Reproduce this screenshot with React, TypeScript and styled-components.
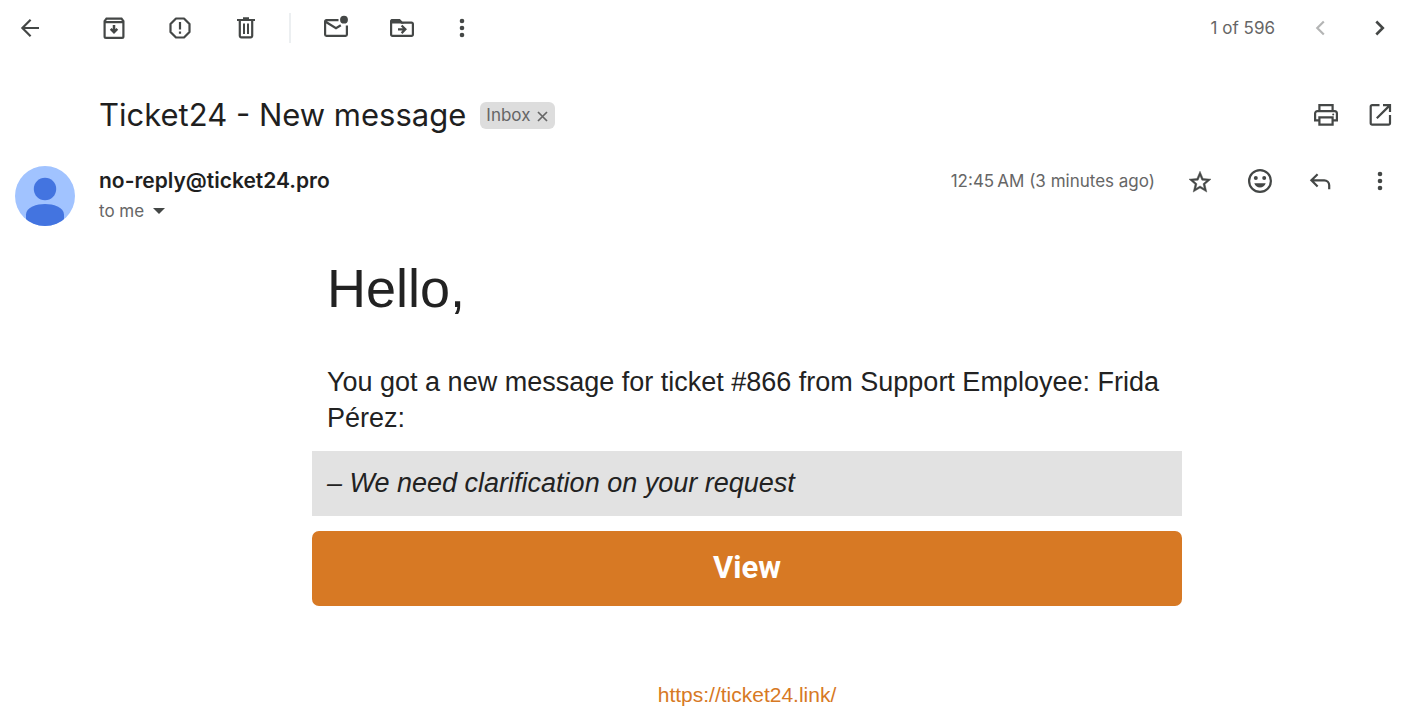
import React from "react";
import styled, { createGlobalStyle } from "styled-components";

const GlobalStyle = createGlobalStyle`
  *, *::before, *::after { box-sizing: border-box; }
  body { margin: 0; background: #fff; color: #1f1f1f; }
  button { border: 0; padding: 0; background: none; color: inherit; font: inherit; cursor: pointer; }
  h1, h2, p, blockquote { margin: 0; font-weight: 400; }
`;

const uiFont = `Inter, Roboto, sans-serif`;
const mailFont = `"Liberation Sans", Arial, sans-serif`;

const Page = styled.div`
  min-height: 100vh;
  padding: 0 14px 18px 15px;
  font-family: ${uiFont};
`;

const Toolbar = styled.nav`
  display: flex;
  align-items: center;
  height: 56px;
  color: #444746;
`;

const ToolGroup = styled.div<{ $gap: number; $start?: number | "auto" }>`
  display: flex;
  align-items: center;
  gap: ${(p) => p.$gap}px;
  margin-left: ${(p) => (p.$start === "auto" ? "auto" : `${p.$start ?? 0}px`)};
`;

const Divider = styled.span`
  width: 2px;
  height: 30px;
  margin: 0 30px 0 28px;
  background: #eceff1;
`;

const Muted = styled.span`
  color: #666;
  font-size: 17px;
  line-height: 30px;
  white-space: nowrap;
`;

const IconButton = styled.button<{ $slim?: boolean }>`
  display: flex;
  justify-content: center;
  width: ${(p) => (p.$slim ? 18 : 30)}px;
  height: 30px;
  color: #444746;

  &:disabled { color: #b4b5b5; cursor: default; }

  svg { flex: none; display: block; }
`;

const SubjectRow = styled.header`
  display: flex;
  align-items: center;
  height: 60px;
  margin: 29px 0 21px;
  padding-left: 84px;
`;

const Subject = styled.h1`
  font-size: 31px;
  line-height: 42px;
`;

const Label = styled.span`
  display: flex;
  align-items: center;
  gap: 7px;
  height: 27px;
  margin-left: 14px;
  padding: 0 7px 0 6px;
  border-radius: 6px;
  background: #ddd;
  color: #666;
  font-size: 17px;
`;

const RemoveLabel = styled.button`
  display: flex;
  padding-top: 3px;
`;

const SenderRow = styled.section`
  display: flex;
  align-items: flex-start;
`;

const Avatar = styled.svg`
  flex: none;
  margin-right: 24px;
`;

const SenderText = styled.div`
  display: flex;
  flex-direction: column;
`;

const Sender = styled.h2`
  font-size: 21px;
  font-weight: 600;
  line-height: 30px;
`;

const Recipient = styled.button`
  display: flex;
  align-items: center;
  gap: 9px;
`;

const MessageArea = styled.main`
  padding: 29px 0 0 84px;
`;

const Message = styled.article`
  max-width: 870px;
  margin: 0 auto;
  color: #222;
  font-family: ${mailFont};
  font-size: 27px;
  line-height: 36px;
`;

const Greeting = styled.p`
  padding: 0 15px;
  font-size: 54px;
  line-height: 66px;
`;

const Paragraph = styled.p`
  padding: 43px 15px 15px;
`;

const Quote = styled.blockquote`
  padding: 14px 15px 15px;
  background: #e2e2e2;
  font-style: italic;
`;

const ViewButton = styled.button`
  display: block;
  width: 100%;
  height: 75px;
  margin-top: 15px;
  padding-bottom: 2px;
  border-radius: 7px;
  background: #d77924;
  color: #fff;
  font-family: Roboto, sans-serif;
  font-size: 31px;
  font-weight: 700;
`;

const Footer = styled.footer`
  padding-top: 77px;
  text-align: center;
  font-size: 21px;
  line-height: 24px;

  a { color: #d77924; text-decoration: none; }
`;

const Icon = ({ children }: { children: React.ReactNode }) => (
  <svg width="30" height="30" viewBox="0 0 30 30" fill="none" stroke="currentColor" strokeWidth="2.2" aria-hidden="true">
    {children}
  </svg>
);

const Dots = () => (
  <Icon>
    <g fill="currentColor" stroke="none">
      <circle cx="15" cy="8" r="2.3" />
      <circle cx="15" cy="15" r="2.3" />
      <circle cx="15" cy="22" r="2.3" />
    </g>
  </Icon>
);

export default function App() {
  return (
    <>
      <GlobalStyle />
      <Page>
        <Toolbar aria-label="Message tools">
          <IconButton aria-label="Back to inbox">
            <Icon><path d="M24 15H8M15.6 6.8 7.4 15l8.2 8.2" /></Icon>
          </IconButton>
          <ToolGroup $gap={36} $start={54}>
            <IconButton aria-label="Archive">
              <Icon>
                <path d="M5.6 8.2 7.5 5.6h15l1.9 2.6v15.2a1.4 1.4 0 0 1-1.4 1.4H7a1.4 1.4 0 0 1-1.4-1.4ZM5.6 9.2h18.8" />
                <path d="M15 12v7M11.7 15.8l3.3 3.4 3.3-3.4" strokeWidth="2.5" />
              </Icon>
            </IconButton>
            <IconButton aria-label="Report spam">
              <Icon>
                <path d="M11 5.5h8l5.5 5.5v8L19 24.5h-8L5.5 19v-8Z" strokeLinejoin="round" />
                <path d="M15 9v7.4M15 18.5v2.3" />
              </Icon>
            </IconButton>
            <IconButton aria-label="Delete">
              <Icon>
                <path d="M6 7h18M12 5.3h6M8.8 7v15.8a1.5 1.5 0 0 0 1.5 1.5h9.4a1.5 1.5 0 0 0 1.5-1.5V7" />
                <path d="M13 10.5V21M17 10.5V21" strokeWidth="2" />
              </Icon>
            </IconButton>
          </ToolGroup>
          <Divider />
          <ToolGroup $gap={36}>
            <IconButton aria-label="Mark as unread">
              <Icon>
                <path d="M17.5 7.1H5.4a1.3 1.3 0 0 0-1.3 1.3v13.2a1.3 1.3 0 0 0 1.3 1.3h19.2a1.3 1.3 0 0 0 1.3-1.3v-9.2M4.6 8.8 15 15.2l4.8-3" />
                <circle cx="23" cy="6.7" r="3.9" fill="currentColor" stroke="none" />
              </Icon>
            </IconButton>
            <IconButton aria-label="Move to">
              <Icon>
                <path d="M4.1 9v-.6a1.3 1.3 0 0 1 1.3-1.3h6.8l2.6 2.6h9.8a1.3 1.3 0 0 1 1.3 1.3v10.6a1.3 1.3 0 0 1-1.3 1.3H5.4a1.3 1.3 0 0 1-1.3-1.3Z" />
                <path d="M4.5 9.3V8a.8.8 0 0 1 .8-.8h6.9l2.1 2.1Z" fill="currentColor" />
                <path d="M11 16.3h7M14.6 12.5l3.8 3.8-3.8 3.8" />
              </Icon>
            </IconButton>
          </ToolGroup>
          <ToolGroup $gap={0} $start={36}>
            <IconButton $slim aria-label="More">
              <Dots />
            </IconButton>
          </ToolGroup>
          <ToolGroup $gap={30} $start="auto">
            <Muted>1 of 596</Muted>
            <IconButton disabled aria-label="Newer">
              <Icon><path d="M18.8 8.5 12.3 15l6.5 6.5" /></Icon>
            </IconButton>
            <IconButton aria-label="Older">
              <Icon><path d="M11.3 8.5 17.8 15l-6.5 6.5" strokeWidth="2.6" /></Icon>
            </IconButton>
          </ToolGroup>
        </Toolbar>

        <SubjectRow>
          <Subject>Ticket24 - New message</Subject>
          <Label>
            Inbox
            <RemoveLabel aria-label="Remove label Inbox">
              <svg width="11" height="11" viewBox="0 0 11 11" stroke="currentColor" strokeWidth="1.7" aria-hidden="true">
                <path d="m1 1 9 9M10 1l-9 9" />
              </svg>
            </RemoveLabel>
          </Label>
          <ToolGroup $gap={24} $start="auto">
            <IconButton aria-label="Print">
              <Icon>
                <path d="M8.4 11V5.1h13.2V11M8.4 20.3H4.1v-6.8a2.4 2.4 0 0 1 2.4-2.4h17a2.4 2.4 0 0 1 2.4 2.4v6.8h-4.3" />
                <path d="M8.4 17.4h13.2v7.2H8.4Z" />
                <circle cx="22.2" cy="14.5" r="1" fill="currentColor" stroke="none" />
              </Icon>
            </IconButton>
            <IconButton aria-label="Open in new window">
              <Icon>
                <path d="M14.5 5.1H7.1a1.4 1.4 0 0 0-1.4 1.4v16.7a1.4 1.4 0 0 0 1.4 1.4h16.5a1.4 1.4 0 0 0 1.4-1.4V15M18 5.1h7V12M24.5 5.6 11.8 18.3" />
              </Icon>
            </IconButton>
          </ToolGroup>
        </SubjectRow>

        <SenderRow>
          <Avatar width="60" height="60" viewBox="0 0 60 60" aria-hidden="true">
            <clipPath id="avatar"><circle cx="30" cy="30" r="30" /></clipPath>
            <g clipPath="url(#avatar)">
              <path d="M0 0h60v60H0Z" fill="#a1c3ff" />
              <circle cx="30" cy="23" r="11.2" fill="#4374e0" />
              <path d="M11 60V48.5C11 41 22 38 30 38s19 3 19 10.5V60Z" fill="#4374e0" />
            </g>
          </Avatar>
          <SenderText>
            <Sender>no-reply@ticket24.pro</Sender>
            <Recipient aria-label="Show details">
              <Muted>to me</Muted>
              <svg width="12" height="6" viewBox="0 0 12 6" fill="#444746" aria-hidden="true">
                <path d="M0 0h12L6 6Z" />
              </svg>
            </Recipient>
          </SenderText>
          <ToolGroup $gap={30} $start="auto">
            <Muted>12:45{"\u202f"}AM (3 minutes ago)</Muted>
            <IconButton aria-label="Star">
              <Icon>
                <path
                  transform="translate(1.8 3) scale(1.1)"
                  fill="currentColor"
                  strokeWidth="0.4"
                  d="m22 9.24-7.19-.62L12 2 9.19 8.63 2 9.24l5.46 4.73L5.82 21 12 17.27 18.18 21l-1.63-7.03ZM12 15.4l-3.76 2.27 1-4.28-3.32-2.88 4.38-.38L12 6.1l1.71 4.04 4.38.38-3.32 2.88 1 4.28Z"
                />
              </Icon>
            </IconButton>
            <IconButton aria-label="Add reaction">
              <Icon>
                <circle cx="15" cy="15" r="10.9" />
                <g fill="currentColor" stroke="none">
                  <circle cx="10.8" cy="12" r="2" />
                  <circle cx="19.2" cy="12" r="2" />
                  <path d="M9.3 17.3h11.4c-.7 2.5-3 4.2-5.7 4.2s-5-1.7-5.7-4.2Z" />
                </g>
              </Icon>
            </IconButton>
            <IconButton aria-label="Reply">
              <Icon><path d="M12.6 8.2 6.4 14.3l6.2 6.2M6.8 14.3h12.4a5 5 0 0 1 5 5v4" /></Icon>
            </IconButton>
            <IconButton aria-label="More actions">
              <Dots />
            </IconButton>
          </ToolGroup>
        </SenderRow>

        <MessageArea>
          <Message>
            <Greeting>Hello,</Greeting>
            <Paragraph>You got a new message for ticket #866 from Support Employee: Frida Pérez:</Paragraph>
            <Quote>– We need clarification on your request</Quote>
            <ViewButton>View</ViewButton>
            <Footer><a href="https://ticket24.link/">https://ticket24.link/</a></Footer>
          </Message>
        </MessageArea>
      </Page>
    </>
  );
}
